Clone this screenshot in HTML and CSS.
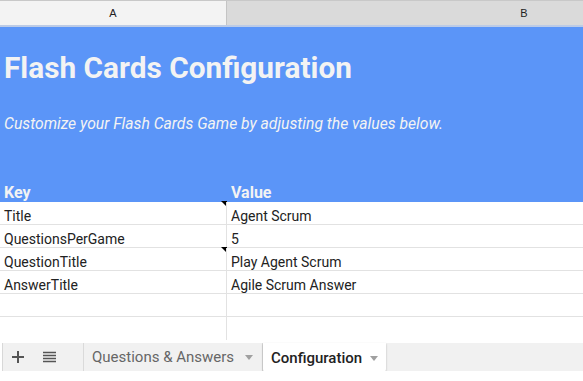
FILE: index.html
```html
<!DOCTYPE html>
<html lang="en">
<head>
<meta charset="UTF-8" />
<meta name="viewport" content="width=device-width, initial-scale=1" />
<title>Flash Cards Configuration</title>
<link rel="stylesheet" href="styles.css">
</head>
<body>
  <div class="sheet">
    <div class="col-heads">
      <div class="col-head col-a">A</div>
      <div class="col-head col-b">B</div>
    </div>

    <div class="banner">
      <h1>Flash Cards Configuration</h1>
      <p class="subtitle">Customize your Flash Cards Game by adjusting the values below.</p>
      <div class="banner-row">
        <div class="cell">Key</div>
        <div class="cell cell-b">Value</div>
      </div>
    </div>

    <div class="rows">
      <div class="row">
        <div class="cell has-note">Title</div>
        <div class="cell cell-b">Agent Scrum</div>
      </div>
      <div class="row">
        <div class="cell">QuestionsPerGame</div>
        <div class="cell cell-b">5</div>
      </div>
      <div class="row">
        <div class="cell has-note">QuestionTitle</div>
        <div class="cell cell-b">Play Agent Scrum</div>
      </div>
      <div class="row">
        <div class="cell">AnswerTitle</div>
        <div class="cell cell-b">Agile Scrum Answer</div>
      </div>
      <div class="row">
        <div class="cell"></div>
        <div class="cell cell-b"></div>
      </div>
      <div class="row row-last">
        <div class="cell"></div>
        <div class="cell cell-b"></div>
      </div>
    </div>

    <div class="tabbar">
      <button class="tool" aria-label="Add sheet">
        <svg width="12" height="12" viewBox="0 0 12 12"><path d="M6 0v12M0 6h12" stroke="#555" stroke-width="2"/></svg>
      </button>
      <button class="tool" aria-label="All sheets">
        <svg width="13" height="12" viewBox="0 0 13 12"><path d="M0 1.5h13M0 4.5h13M0 7.5h13M0 10.5h13" stroke="#555" stroke-width="1.6"/></svg>
      </button>
      <div class="tab">Questions &amp; Answers <span class="caret"></span></div>
      <div class="tab active">Configuration <span class="caret"></span></div>
    </div>
  </div>
</body>
</html>
```

FILE: styles.css
```css
body {
  margin: 0;
  font-family: Roboto, "Liberation Sans", Arial, sans-serif;
  background: #fff;
  color: #222;
  width: 583px;
  height: 381px;
  overflow: hidden;
}
.sheet {
  width: 583px;
  overflow: hidden;
}
.col-heads {
  display: flex;
  overflow: hidden;
  border-top: 1px solid #c8c8c8;
  border-bottom: 2px solid #bccbe6;
  box-sizing: border-box;
  height: 27px;
  font-family: "Liberation Sans", Arial, sans-serif;
  font-size: 11px;
  color: #222;
}
.col-head {
  display: flex;
  align-items: center;
  justify-content: center;
  flex-shrink: 0;
}
.col-a {
  width: 226px;
  background: #f3f3f3;
  border-right: 1px solid #c4c4c4;
}
.col-b {
  width: 594px;
  background: #dadada;
}
.banner {
  background: #5b95f8;
  color: #f3f3f3;
  height: 175px;
  padding-top: 24px;
  box-sizing: border-box;
  display: flex;
  flex-direction: column;
}
.banner h1 {
  margin: 0;
  padding-left: 4px;
  font-size: 29.8px;
  line-height: 34px;
  font-weight: 700;
}
.subtitle {
  margin: 0;
  padding-left: 4px;
  padding-top: 29px;
  font-size: 15.7px;
  line-height: 20px;
  font-style: italic;
}
.banner-row {
  margin-top: auto;
  display: grid;
  grid-template-columns: 227px 1fr;
  font-size: 16px;
  font-weight: 700;
  line-height: 18px;
}
.banner-row .cell {
  padding-left: 4px;
}
.rows {
  display: flex;
  flex-direction: column;
}
.row {
  display: grid;
  grid-template-columns: 226px 1fr;
  height: 23px;
  border-bottom: 1px solid #e2e2e2;
  box-sizing: border-box;
  font-size: 14px;
}
.row-last {
  border-bottom: none;
}
.row .cell {
  position: relative;
  padding: 6px 0 0 4px;
  line-height: 16px;
  white-space: nowrap;
}
.row .cell-b {
  border-left: 1px solid #e2e2e2;
}
.has-note::after {
  content: "";
  position: absolute;
  top: -1px;
  right: -1px;
  border-top: 6px solid #000;
  border-left: 6px solid transparent;
}
.tabbar {
  margin-top: 3px;
  height: 28px;
  background: #f1f1f1;
  display: flex;
  align-items: stretch;
  border-left: 1px solid #d8d8d8;
  margin-left: 2px;
}
.tool {
  border: none;
  background: none;
  padding: 0;
  width: 33px;
  display: flex;
  align-items: center;
  justify-content: center;
}
.tool:first-child {
  width: 30px;
}
.tabbar .tab {
  display: flex;
  align-items: center;
  gap: 11px;
  padding: 0 9px 0 8px;
  margin-left: 17px;
  font-size: 15px;
  color: #666;
  border-left: 1px solid #dadada;
  border-right: 1px solid #dadada;
}
.tabbar .tab.active {
  margin-left: 0;
  gap: 8px;
  background: #fff;
  color: #222;
  font-weight: 500;
  border: none;
  border-radius: 0 0 3px 3px;
  box-shadow: 0 1px 2px rgba(0, 0, 0, 0.3);
  height: 29px;
  box-sizing: border-box;
  padding: 0 8px 0 8px;
}
.caret {
  width: 0;
  height: 0;
  border-top: 5px solid #a0a0a0;
  border-left: 4px solid transparent;
  border-right: 4px solid transparent;
  margin-top: 1px;
}
```
